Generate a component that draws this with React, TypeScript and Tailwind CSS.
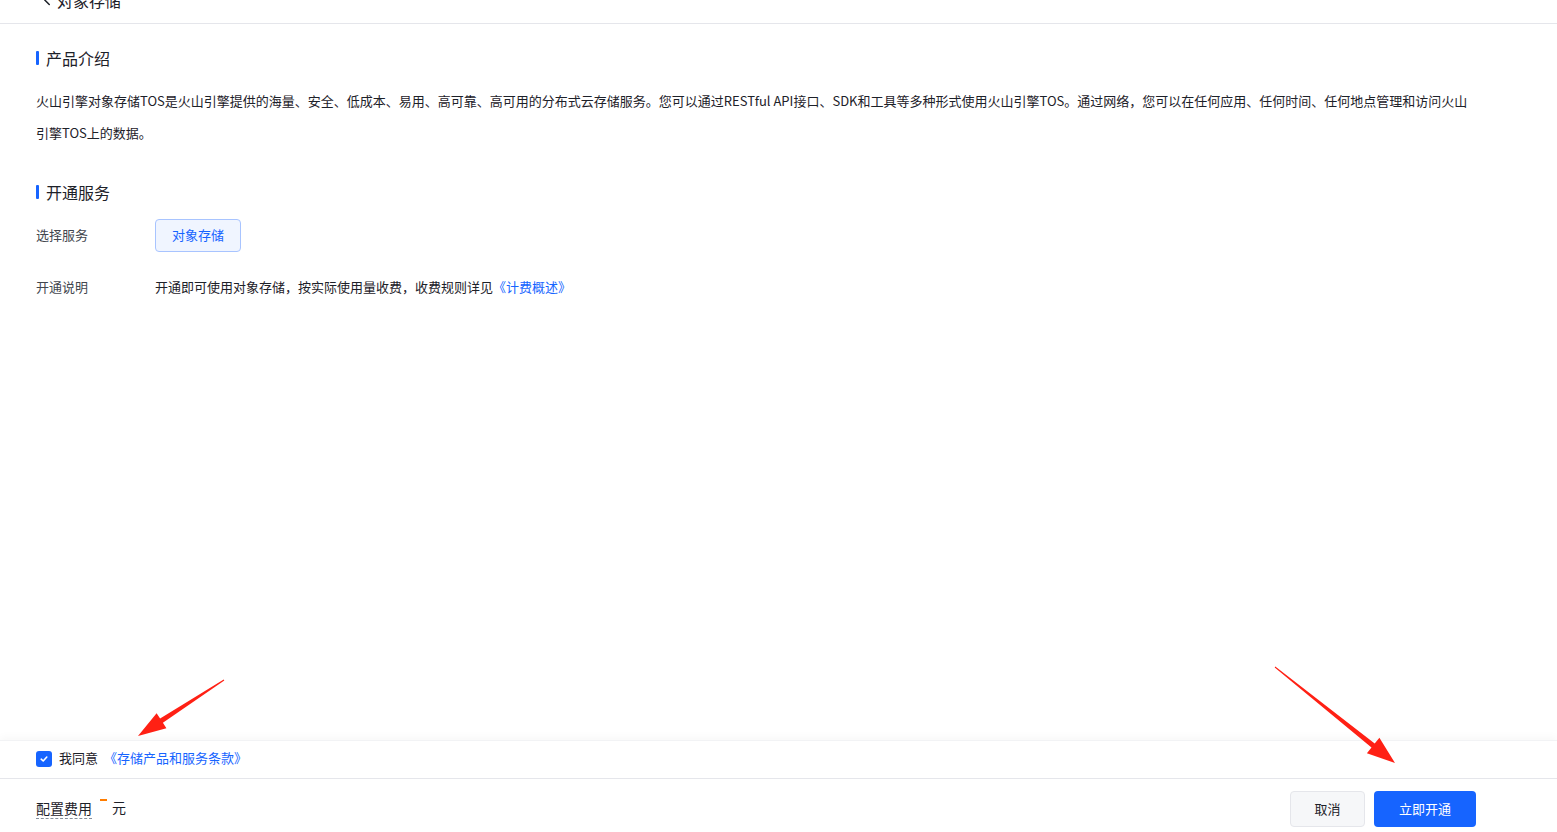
import { ChevronLeft } from 'lucide-react';

const font = { fontFamily: '"Noto Sans CJK SC", "Noto Sans", sans-serif' };

// Section heading with the blue marker bar
function SectionTitle({ children }: { children: string }) {
  return (
    <div className="flex items-center h-6">
      <span className="w-[3px] h-[14px] bg-[#1664ff] rounded-[1px] mr-[7px]" />
      <span className="text-[16px] text-[#1d2129]">{children}</span>
    </div>
  );
}

// Red call-out arrows layered above the page
function Arrows() {
  return (
    <svg className="absolute inset-0 pointer-events-none" width="1557" height="832">
      <polygon
        fill="#ff2014"
        points="224.3,680.4 162.9,722.8 166.4,728.2 138,736 156.6,713.2 160.1,718.6 223.7,679.6"
      />
      <polygon
        fill="#ff2014"
        points="1274.7,667.4 1371.5,747.5 1366.9,753.3 1395,763 1379.4,737.7 1374.7,743.5 1275.3,666.6"
      />
    </svg>
  );
}

export default function App() {
  return (
    <div className="relative h-[832px] w-full bg-white flex flex-col overflow-hidden" style={font}>
      {/* Top bar, scrolled partly out of view */}
      <div className="h-[24px] border-b border-[#e5e6eb] overflow-hidden">
        <div className="flex items-center h-[24px] -mt-[12px] pl-[38px] text-[16px] text-[#1d2129]">
          <ChevronLeft size={18} strokeWidth={2} className="mr-[1px]" />
          <span>对象存储</span>
        </div>
      </div>

      <main className="flex-1 pl-[36px] pr-[36px] pt-[22px]">
        <SectionTitle>产品介绍</SectionTitle>
        <p className="mt-[15px] text-[13px] leading-[32px] text-[#1d2129]">
          火山引擎对象存储TOS是火山引擎提供的海量、安全、低成本、易用、高可靠、高可用的分布式云存储服务。您可以通过RESTful API接口、SDK和工具等多种形式使用火山引擎TOS。通过网络，您可以在任何应用、任何时间、任何地点管理和访问火山
          <br />
          引擎TOS上的数据。
        </p>

        <div className="mt-[31px]">
          <SectionTitle>开通服务</SectionTitle>
        </div>

        <div className="mt-[15px] flex items-center text-[13px]">
          <span className="w-[119px] text-[#42464e] -mt-[2px]">选择服务</span>
          <button className="h-[33px] w-[86px] rounded-[4px] border border-[#a8c4ff] bg-[#f0f5ff] text-[#1664ff] text-[13px] pb-[2px]">
            对象存储
          </button>
        </div>

        <div className="mt-[24px] flex items-center h-[22px] text-[13px]">
          <span className="w-[119px] text-[#42464e]">开通说明</span>
          <span className="text-[#1d2129]">
            开通即可使用对象存储，按实际使用量收费，收费规则详见
            <span className="text-[#1664ff]">《计费概述》</span>
          </span>
        </div>
      </main>

      <footer className="shadow-[0_-3px_8px_rgba(0,0,0,0.03)]">
        <div className="h-[39px] border-t border-[#f2f3f5] border-b border-b-[#e5e6eb] flex items-center pl-[36px] pb-[3px] text-[13px]">
          <span className="w-4 h-4 rounded-[3px] bg-[#1664ff] flex items-center justify-center mr-[7px] mt-[1px]">
            <svg width="10" height="10" viewBox="0 0 10 10">
              <polyline points="2.2,5.2 4.2,7 7.8,3" fill="none" stroke="white" strokeWidth="1.6" strokeLinecap="round" strokeLinejoin="round" />
            </svg>
          </span>
          <span className="text-[#1d2129]">我同意</span>
          <span className="ml-[6px] text-[#1664ff]">《存储产品和服务条款》</span>
        </div>

        <div className="h-[53px] flex items-start justify-between pl-[36px] pr-[81px] pt-[12px]">
          <div className="flex items-center h-[36px] text-[14px] text-[#1d2129] -mt-[2px]">
            <span className="border-b border-dashed border-[#86909c] leading-[20px] mt-[2px]">配置费用</span>
            <span className="ml-[8px] mb-[14px] w-[7px] h-[2px] bg-[#ff7d00]" />
            <span className="ml-[5px]">元</span>
          </div>
          <div className="flex items-center gap-[9px]">
            <button className="h-[36px] w-[75px] rounded-[4px] border border-[#e5e6eb] bg-[#f6f7f9] text-[13px] text-[#1d2129]">
              取消
            </button>
            <button className="h-[36px] w-[102px] rounded-[4px] bg-[#1664ff] text-[13px] text-white">
              立即开通
            </button>
          </div>
        </div>
      </footer>

      <Arrows />
    </div>
  );
}
